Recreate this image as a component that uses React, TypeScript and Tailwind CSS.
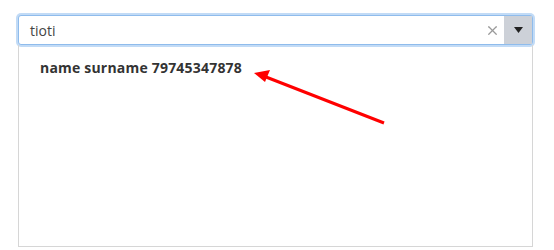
import { X } from "lucide-react";

// annotated select dropdown: search box, one result, red arrow pointing at it
export default function App() {
  return (
    <div className="relative w-[554px] h-[250px] bg-white font-['Open_Sans',sans-serif] text-[#333]">
      <div className="ml-[18px] pt-[15px] w-[515px]">
        {/* search input */}
        <div className="flex h-[30px] rounded-[3px] border border-[#8fbcec] shadow-[0_0_0_2px_#c2dbf6] bg-white">
          <div className="flex-1 flex items-center pl-[11px] text-[14px] text-[#444]">tioti</div>
          <div className="w-[24px] flex items-center justify-center text-[#9a9a9a]">
            <X className="w-[15px] h-[15px]" strokeWidth={2} />
          </div>
          <div className="w-[28px] flex items-center justify-center bg-[#cdd1d8]">
            <svg width="9" height="6" viewBox="0 0 9 6">
              <path d="M0 0h9L4.5 6z" fill="#222" />
            </svg>
          </div>
        </div>

        {/* results panel */}
        <div className="h-[202px] border-x border-b border-[#d6d6d6]">
          <div className="pl-[21px] pt-[13px] text-[14px] font-bold tracking-[0.2px] text-[#333] leading-[20px]">
            name surname 79745347878
          </div>
        </div>
      </div>

      {/* annotation arrow */}
      <svg className="absolute left-0 top-0 pointer-events-none" width="554" height="250">
        <line x1="384" y1="123" x2="266" y2="77" stroke="#f00" strokeWidth="3" />
        <path d="M254 73 L270 70 L265 82 Z" fill="#f00" />
      </svg>
    </div>
  );
}
